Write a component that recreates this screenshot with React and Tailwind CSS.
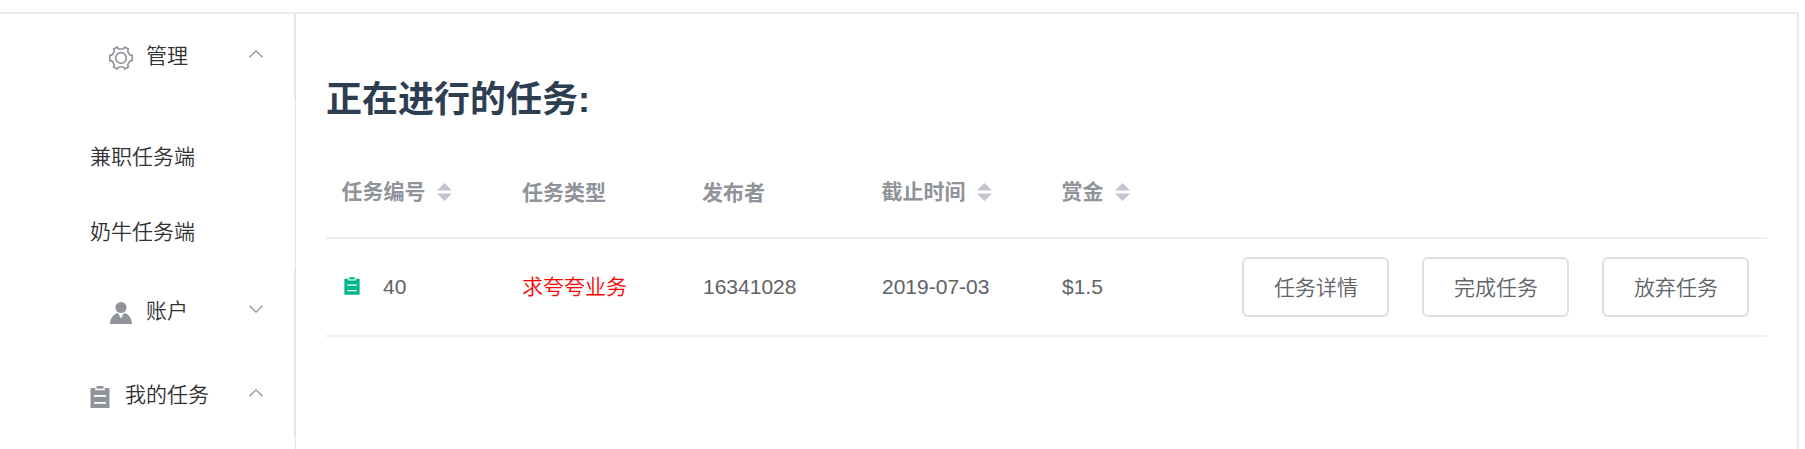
import React from "react";

const Chevron = ({ down }) => (
  <svg className={down ? "w-[14px] h-2 rotate-180" : "w-[14px] h-2"} viewBox="0 0 14 8" fill="none" stroke="#909399" strokeWidth="1.3">
    <path d="M.5 7.3 7 .9l6.5 6.4" />
  </svg>
);

const Gear = () => (
  <svg className="w-6 h-6" viewBox="0 0 24 24" fill="none" stroke="#909399" strokeWidth="1.7" strokeLinejoin="round">
    <path d="M8.300 1Q8.800 3 10 3H14Q15.200 3 15.700 1L19.400 3.100Q18.400 4.800 19 5.900L20.700 8.600Q21.300 9.300 23.200 9.300V14.700Q21.300 14.700 20.700 15.400L19 18.100Q18.400 19.200 19.400 20.900L15.700 23Q15.200 21 14 21H10Q8.800 21 8.300 23L4.600 20.900Q5.600 19.200 5 18.100L3.300 15.400Q2.700 14.700 .8 14.700V9.300Q2.700 9.300 3.300 8.600L5 5.900Q5.600 4.800 4.600 3.100Z" />
    <circle cx="12" cy="12" r="5.3" />
  </svg>
);

const User = () => (
  <svg className="w-6 h-6" viewBox="0 0 24 24" fill="#909399">
    <circle cx="12" cy="6.5" r="5.5" />
    <path d="M1 23C1.200 17.500 4 13.400 8.300 12L10.400 13.800 10.600 15.400 12 17.200 13.400 15.400 13.600 13.800 15.700 12C20 13.400 22.800 17.500 23 23Z" />
  </svg>
);

const Order = ({ className }) => (
  <svg className={className} viewBox="0 0 20 22" fill="currentColor">
    <path d="M6.500 0H13.500V2.700H6.500Z" />
    <path fillRule="evenodd" d="M.500 2H5.300V4.200H14.700V2H19.500V22H.500ZM4 9V10.700H16V9ZM4 16V17.700H16V16Z" />
  </svg>
);

const Sort = () => (
  <svg className="w-[15px] h-[18px] ml-[11px]" viewBox="0 0 15 18" fill="#c0c4cc">
    <path d="M7.500 0 15 7.500H0ZM0 10.500H15L7.500 18Z" />
  </svg>
);

const MenuTitle = ({ icon, label, down, indent, gap }) => (
  <div className="h-[84px] flex items-center border-r border-[#e4e4e4]">
    <div className={indent}>{icon}</div>
    <div className={gap}>{label}</div>
    <div className="mr-[31px] -mt-1 flex"><Chevron down={down} /></div>
  </div>
);

const SubItem = ({ label }) => <div className="h-[75px] pl-[90px] flex items-center">{label}</div>;

const headers = [
  ["任务编号", true], ["任务类型", false], ["发布者", false], ["截止时间", true], ["赏金", true],
];

export default function App() {
  return (
    <div className="h-[449px] overflow-hidden bg-white pt-3 text-[21px] leading-[30px] font-['Liberation_Sans','Noto_Sans_CJK_SC',sans-serif]">
      <div className="w-[1799px] h-[437px] flex border-t-2 border-r-2 border-[#ebebeb]">
        <nav className="w-[296px] shrink-0 border-r border-[#e4e4e4] text-[#303133] font-[350]">
          <MenuTitle icon={<Gear />} label="管理" indent="ml-[109px] mt-[3px]" gap="flex-1 ml-[13px] -mt-px" />
          <div className="pt-[21px]">
            <SubItem label="兼职任务端" />
            <SubItem label="奶牛任务端" />
          </div>
          <MenuTitle icon={<User />} label="账户" down indent="ml-[109px] mt-[3px]" gap="flex-1 ml-[13px] -mt-px" />
          <MenuTitle icon={<Order className="w-5 h-[22px] text-[#909399]" />} label="我的任务" indent="ml-[90px] mt-[4px]" gap="flex-1 ml-[15px] -mt-px" />
        </nav>
        <main className="ml-[30px] w-[1441px]">
          <h1 className="mt-[61px] h-[50px] text-[36px] leading-[50px] font-bold text-[#2c3e50]">正在进行的任务:</h1>
          <div className="mt-[19px] h-[95px] flex items-center pt-[3px] border-b-2 border-[#ebeef5] text-[#909399] font-bold">
            {headers.map(([label, sortable]) => (
              <div key={label} className={sortable ? "w-[180px] pl-[15.500px] flex items-center" : "w-[180px] pl-4 pt-px flex items-center"}>
                {label}
                {sortable && <Sort />}
              </div>
            ))}
          </div>
          <div className="h-[98px] flex items-center border-b-2 border-[#ebeef5] text-[#606266] font-[350]">
            <div className="w-[180px] pl-[18px] flex items-center">
              <Order className="w-4 h-[18px] -mt-0.5 text-[#00b38a]" />
              <span className="ml-[23px]">40</span>
            </div>
            <div className="w-[180px] pl-4 text-[#ff0000]">求夸夸业务</div>
            <div className="w-[180px] pl-[17px]">16341028</div>
            <div className="w-[180px] pl-4">2019-07-03</div>
            <div className="w-[180px] pl-4">$1.5</div>
            {["任务详情", "完成任务", "放弃任务"].map((t) => (
              <div key={t} className="w-[180px] pl-4">
                <button className="block w-[147px] h-[60px] rounded-md border-2 border-[#dcdfe6] bg-white text-center pl-px pt-px">{t}</button>
              </div>
            ))}
          </div>
        </main>
      </div>
    </div>
  );
}
